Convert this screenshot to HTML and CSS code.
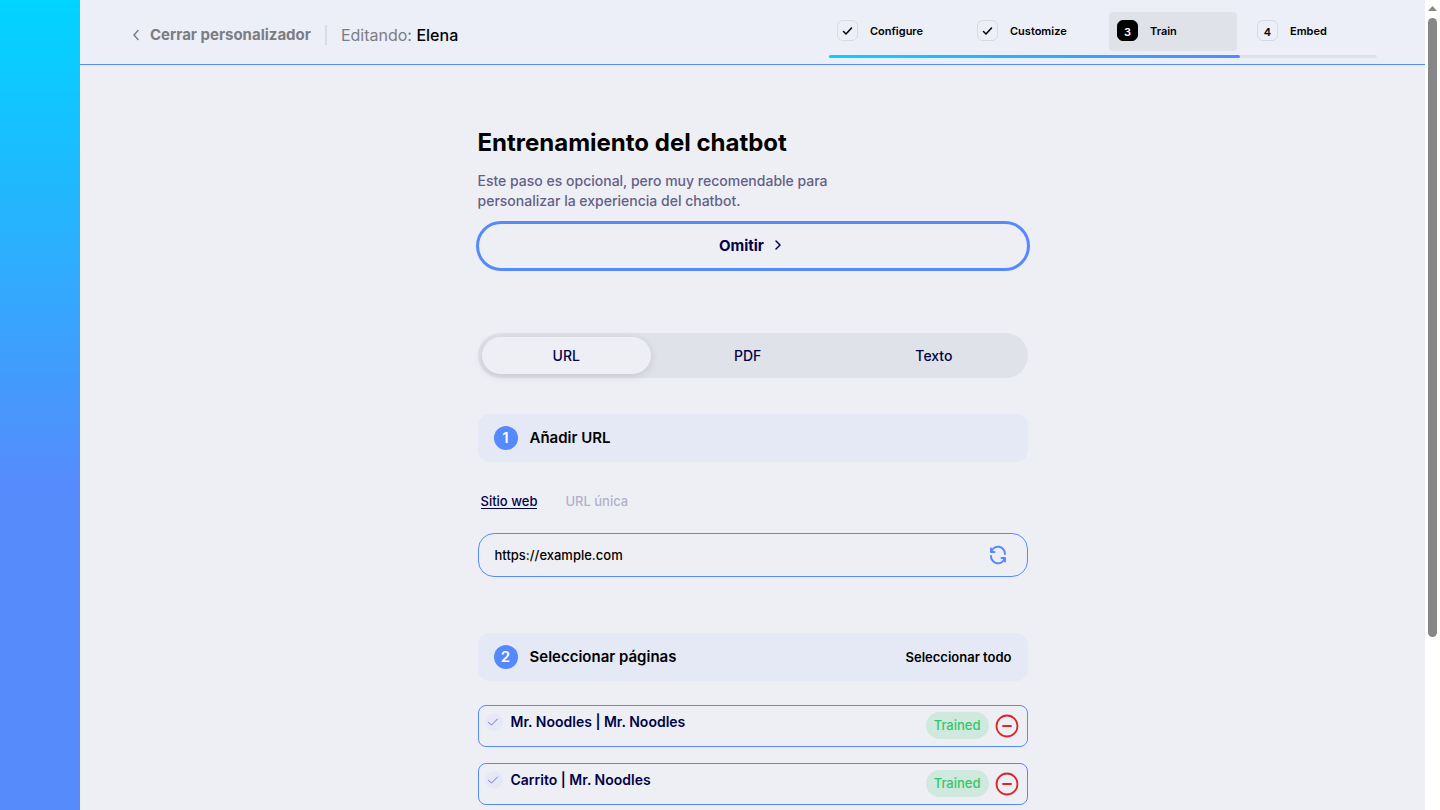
FILE: index.html
```html
<!DOCTYPE html>
<html lang="es">
<head>
<meta charset="utf-8">
<meta name="viewport" content="width=device-width, initial-scale=1">
<title>Entrenamiento del chatbot</title>
<link rel="stylesheet" href="styles.css">
</head>
<body>
<div class="app">
  <aside class="rail"></aside>
  <div class="page">
    <header class="topbar">
      <div class="crumbs">
        <a class="close-link" href="#"><svg width="8" height="12" viewBox="0 0 8 12"><path d="M6 1.500 2 6l4 4.500"/></svg>Cerrar personalizador</a>
        <span class="divider"></span>
        <span class="editing">Editando: <strong>Elena</strong></span>
      </div>
      <nav class="stepper">
        <div class="steps">
          <a class="step" href="#"><span class="step-mark"><svg width="11" height="10" viewBox="0 0 11 10"><path d="M1.500 5.500 4 8l5.500-6"/></svg></span>Configure</a>
          <a class="step" href="#"><span class="step-mark"><svg width="11" height="10" viewBox="0 0 11 10"><path d="M1.500 5.500 4 8l5.500-6"/></svg></span>Customize</a>
          <a class="step step-current" href="#"><span class="step-mark">3</span>Train</a>
          <a class="step" href="#"><span class="step-mark">4</span>Embed</a>
        </div>
        <div class="progress"><div class="progress-fill" style="width: 75%"></div></div>
      </nav>
    </header>
    <main class="content">
      <h1 class="title">Entrenamiento del chatbot</h1>
      <p class="intro">Este paso es opcional, pero muy recomendable para personalizar la experiencia del chatbot.</p>
      <button class="skip" type="button">Omitir <svg width="8" height="12" viewBox="0 0 8 12"><path d="m2 2 4 4-4 4"/></svg></button>
      <div class="tabs">
        <button class="tab tab-active" type="button">URL</button>
        <button class="tab" type="button">PDF</button>
        <button class="tab" type="button">Texto</button>
      </div>
      <section class="add-url">
        <div class="section-head"><span class="badge">1</span><h2 class="section-title">Añadir URL</h2></div>
        <div class="modes">
          <button class="mode mode-active" type="button">Sitio web</button>
          <button class="mode" type="button">URL única</button>
        </div>
        <div class="url-box">
          <input class="url-input" type="text" value="https://example.com" aria-label="URL del sitio web">
          <button class="refresh" type="button" aria-label="Actualizar"><svg width="20" height="20" viewBox="0 0 20 20"><path d="M3 3.500V7H6.500M3.300 6.700A7 7 0 0 1 17 9M17 16.500V13H13.500M16.700 13.300A7 7 0 0 1 3 11"/></svg></button>
        </div>
      </section>
      <section class="pick-pages">
        <div class="section-head"><span class="badge">2</span><h2 class="section-title">Seleccionar páginas</h2><button class="select-all" type="button">Seleccionar todo</button></div>
        <ul class="pages">
          <li class="row">
            <span class="row-check"><svg width="12" height="10" viewBox="0 0 12 10"><path d="m1.500 5.500 3 2.500 6-6"/></svg></span>
            <span class="row-name">Mr. Noodles | Mr. Noodles</span>
            <span class="status">Trained</span>
            <button class="remove" type="button" aria-label="Quitar"><svg width="24" height="24" viewBox="0 0 24 24"><circle cx="12" cy="12" r="10.500"/><path d="M8 12h8"/></svg></button>
          </li>
          <li class="row">
            <span class="row-check"><svg width="12" height="10" viewBox="0 0 12 10"><path d="m1.500 5.500 3 2.500 6-6"/></svg></span>
            <span class="row-name">Carrito | Mr. Noodles</span>
            <span class="status">Trained</span>
            <button class="remove" type="button" aria-label="Quitar"><svg width="24" height="24" viewBox="0 0 24 24"><circle cx="12" cy="12" r="10.500"/><path d="M8 12h8"/></svg></button>
          </li>
        </ul>
      </section>
    </main>
  </div>
  <div class="scrollbar" aria-hidden="true">
    <svg class="scroll-arrow" width="9" height="5" viewBox="0 0 9 5"><path d="M4.500 0 9 5H0z"/></svg>
    <div class="scroll-thumb"></div>
  </div>
</div>
</body>
</html>
```

FILE: styles.css
```css
* { box-sizing: border-box; }
body {
  margin: 0;
  font-family: Inter, "Liberation Sans", sans-serif;
  color: #000;
  background: #eeeff5;
}
h1, h2, p, ul { margin: 0; padding: 0; }
button, input { font: inherit; color: inherit; background: none; border: 0; margin: 0; padding: 0; }
button { cursor: pointer; }
a { color: inherit; text-decoration: none; }
svg { display: block; fill: none; stroke: currentColor; stroke-linecap: round; stroke-linejoin: round; }

.app { display: grid; grid-template-columns: 80px 1fr 15px; min-height: 100vh; }
.rail { background: linear-gradient(#00d4ff, #568bfc 60%); }
.page { min-width: 0; }

.topbar {
  display: flex;
  justify-content: space-between;
  align-items: flex-start;
  height: 65px;
  padding: 0 48px 0 52px;
  background: #eceff8;
  border-bottom: 1px solid #558aff;
}
.crumbs { display: flex; align-items: center; height: 70px; color: #7c7d82; }
.close-link { display: flex; align-items: center; gap: 10px; font-size: 15px; line-height: 20px; padding-bottom: 1px; font-weight: 700; }
.close-link svg { stroke-width: 1.5; }
.divider { width: 2px; height: 20px; margin: 0 14px; background: #d9dce8; }
.editing { font-size: 16px; }
.editing strong { font-weight: 500; color: #000; }

.stepper { padding-top: 12px; }
.steps { display: grid; grid-template-columns: repeat(4, 128px); gap: 12px; }
.step { display: flex; align-items: center; gap: 12px; height: 39px; padding: 0 8px 2px; border-radius: 4px; font-size: 11px; font-weight: 600; }
.step-current { background: #e0e2ea; }
.step-mark { display: grid; place-items: center; width: 21px; height: 21px; padding-top: 2px; border: 1px solid #d9dadf; border-radius: 6px; }
.step-mark svg { stroke-width: 1.5; margin-bottom: 2px; }
.step-current .step-mark { background: #000; border-color: #000; color: #fff; }
.progress { height: 3px; margin-top: 4px; border-radius: 2px; background: #e0e2ea; }
.progress-fill { height: 100%; border-radius: 2px; background: linear-gradient(90deg, #00d4ff, #558aff); }

.content { width: 550px; max-width: 100%; margin: 0 auto; padding: 62px 0 5px; }
.title { font-size: 24px; line-height: 32px; font-weight: 700; }
.intro { max-width: 400px; margin-top: 12px; font-size: 14px; line-height: 20px; font-weight: 500; color: #636088; }
.skip {
  display: flex;
  align-items: center;
  justify-content: center;
  gap: 10px;
  width: calc(100% + 4px);
  height: 50px;
  margin: 10px -2px 0;
  padding: 0 4px 2px 0;
  border: 3px solid #558aff;
  border-radius: 25px;
  font-size: 15px;
  font-weight: 700;
  color: #000248;
}
.skip svg { stroke-width: 1.5; }
.tabs { display: flex; gap: 12px; height: 45px; margin-top: 62px; padding: 4px; border-radius: 24px; background: #e0e2ea; }
.tab { flex: 1 1 auto; border-radius: 20px; font-size: 14px; font-weight: 500; color: #000248; }
.tab-active { background: #eeeff5; box-shadow: 0 2px 8px rgba(0, 0, 0, 0.12); }

.section-head { display: flex; align-items: center; gap: 12px; height: 48px; padding: 0 16px; border-radius: 12px; background: #e5e9f6; }
.badge { display: grid; place-items: center; width: 24px; height: 24px; padding-bottom: 1px; border-radius: 50%; background: #558aff; color: #fff; font-size: 15px; font-weight: 600; }
.section-title { flex: 1; padding-bottom: 2px; font-size: 15px; font-weight: 600; }
.select-all { font-size: 13px; font-weight: 600; }

.add-url { margin-top: 36px; }
.modes { display: flex; gap: 28px; margin-top: 32px; padding-left: 3px; }
.mode { height: 15px; border-bottom: 1px solid transparent; font-size: 13px; line-height: 15px; font-weight: 500; color: #b3b1cb; }
.mode-active { border-color: #000248; color: #000248; }
.url-box { display: flex; align-items: center; height: 44px; margin-top: 24px; padding: 0 19px 0 16px; border: 1px solid #558aff; border-radius: 16px; }
.url-input { flex: 1; min-width: 0; outline: 0; font-size: 13px; font-weight: 500; }
.refresh { color: #558aff; }
.refresh svg { stroke-width: 2; }

.pick-pages { margin-top: 56px; }
.pages { display: grid; gap: 16px; margin-top: 24px; list-style: none; }
.row { display: flex; align-items: center; height: 42px; padding: 0 8px 0 6px; border: 1px solid #558aff; border-radius: 8px; }
.row-check { display: grid; place-items: center start; align-self: flex-start; width: 18px; height: 18px; margin-top: 7px; padding-left: 2px; border-radius: 50%; background: #e5e9f6; color: #7b6be0; }
.row-name { flex: 1; align-self: flex-start; margin: 6px 0 0 8px; font-size: 14px; line-height: 20px; font-weight: 600; color: #000248; }
.status { align-self: flex-start; margin-top: 6px; padding: 5px 8px; border-radius: 14px; background: #cfe9de; color: #34c66c; font-size: 13px; line-height: 17px; font-weight: 500; }
.remove { margin-left: 6px; color: #dc2626; }
.remove svg { stroke-width: 1.8; }

.scrollbar { display: flex; flex-direction: column; align-items: center; gap: 7px; height: 100vh; padding: 6px 3px 0; background: #fff; }
.scroll-arrow { flex: none; fill: #878787; stroke: none; }
.scroll-thumb { width: 9px; height: 77%; border-radius: 5px; background: #878787; }
```
